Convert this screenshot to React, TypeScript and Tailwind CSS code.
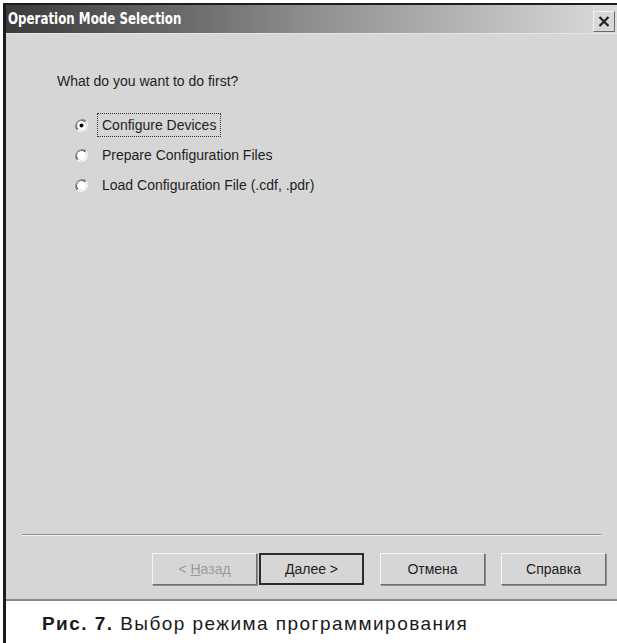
import React, { useState } from "react";

type Mode = "configure" | "prepare" | "load";

const modes: { id: Mode; label: string }[] = [
  { id: "configure", label: "Configure Devices" },
  { id: "prepare", label: "Prepare Configuration Files" },
  { id: "load", label: "Load Configuration File (.cdf, .pdr)" },
];

function Radio({ checked }: { checked: boolean }) {
  // classic sunken radio
  return (
    <svg width="13" height="13" viewBox="0 0 12 12" className="shrink-0">
      <path d="M10.2 1.8 A6 6 0 0 0 1.8 10.2" fill="none" stroke="#8a8a8a" strokeWidth="1" />
      <path d="M9.4 2.6 A4.9 4.9 0 0 0 2.6 9.4" fill="none" stroke="#3c3c3c" strokeWidth="1" />
      <path d="M1.8 10.2 A6 6 0 0 0 10.2 1.8" fill="none" stroke="#ffffff" strokeWidth="1" />
      <circle cx="6" cy="6" r="4.2" fill="#ffffff" />
      {checked && <circle cx="6" cy="6" r="1.8" fill="#000" />}
    </svg>
  );
}

function Btn({
  children,
  primary,
  disabled,
}: {
  children: React.ReactNode;
  primary?: boolean;
  disabled?: boolean;
}) {
  return (
    <button
      className={
        "h-[32px] w-[105px] bg-[#d6d6d6] text-[14px] leading-none " +
        (primary
          ? "border-2 border-[#2b2b2b] "
          : "border border-t-[#f4f4f4] border-l-[#f4f4f4] border-r-[#6e6e6e] border-b-[#6e6e6e] shadow-[1px_1px_0_#8c8c8c] ") +
        (disabled ? "text-[#9a9a9a]" : "text-[#222]")
      }
    >
      {children}
    </button>
  );
}

export default function App() {
  const [mode, setMode] = useState<Mode>("configure");

  return (
    <div className="w-[617px] h-[643px] bg-white pt-[3px] pl-[3px] overflow-hidden font-['Liberation_Sans',Arial,sans-serif]">
      <div className="flex flex-col h-full border-l-[3px] border-t-[2px] border-[#1c1c1c]">
        {/* title bar */}
        <div className="h-[28px] flex items-center justify-between pl-[2px] pr-[2px] bg-gradient-to-r from-[#3b3b3b] via-[#8f8f8f] to-[#dcdcdc]">
          <span className="block text-white font-bold text-[15px] font-['DejaVu_Sans',sans-serif] origin-left [transform:scaleX(0.79)] whitespace-nowrap">
            Operation Mode Selection
          </span>
          <span className="w-[22px] h-[21px] mt-[5px] flex items-center justify-center bg-[#d8d8d8] border border-t-[#f4f4f4] border-l-[#f4f4f4] border-r-[#6a6a6a] border-b-[#6a6a6a]">
            <svg width="12" height="11" viewBox="0 0 12 11">
              <path d="M1.5 1 L10.5 10 M10.5 1 L1.5 10" stroke="#222" strokeWidth="2.2" />
            </svg>
          </span>
        </div>

        {/* dialog body */}
        <div className="h-[568px] bg-[#d6d6d6] border-t border-[#e6e6e6] border-b-2 border-b-[#8a8a8a] flex flex-col">
          <div className="flex-1 pl-[51px] pt-[38px] text-[14px] text-[#1e1e1e]">
            <p className="leading-[18px]">What do you want to do first?</p>
            <div className="mt-[26px] pl-[18px] flex flex-col gap-[12px]">
              {modes.map((m) => (
                <label
                  key={m.id}
                  className="flex items-center gap-[12px] h-[18px] cursor-default"
                  onClick={() => setMode(m.id)}
                >
                  <Radio checked={mode === m.id} />
                  <span
                    className={
                      "px-[2px] leading-[18px] " +
                      (mode === m.id ? "outline outline-1 outline-dotted outline-[#333] outline-offset-[2px]" : "")
                    }
                  >
                    {m.label}
                  </span>
                </label>
              ))}
            </div>
          </div>

          <div className="mx-[16px] border-t border-t-[#8c8c8c] border-b border-b-[#f2f2f2]" />
          <div className="flex justify-end gap-[16px] pr-[11px] pt-[17px] pb-[14px]">
            <div className="flex gap-[2px]">
              <Btn disabled>
                &lt; <span className="underline">Н</span>азад
              </Btn>
              <Btn primary>Далее &gt;</Btn>
            </div>
            <Btn>Отмена</Btn>
            <Btn>Справка</Btn>
          </div>
        </div>

        {/* figure caption */}
        <div className="flex-1 pl-[36px] pt-[9px] text-[19px] tracking-[1.45px] text-[#1a1a1a] whitespace-nowrap">
          <b>Рис. 7.</b> Выбор режима программирования
        </div>
      </div>
    </div>
  );
}
